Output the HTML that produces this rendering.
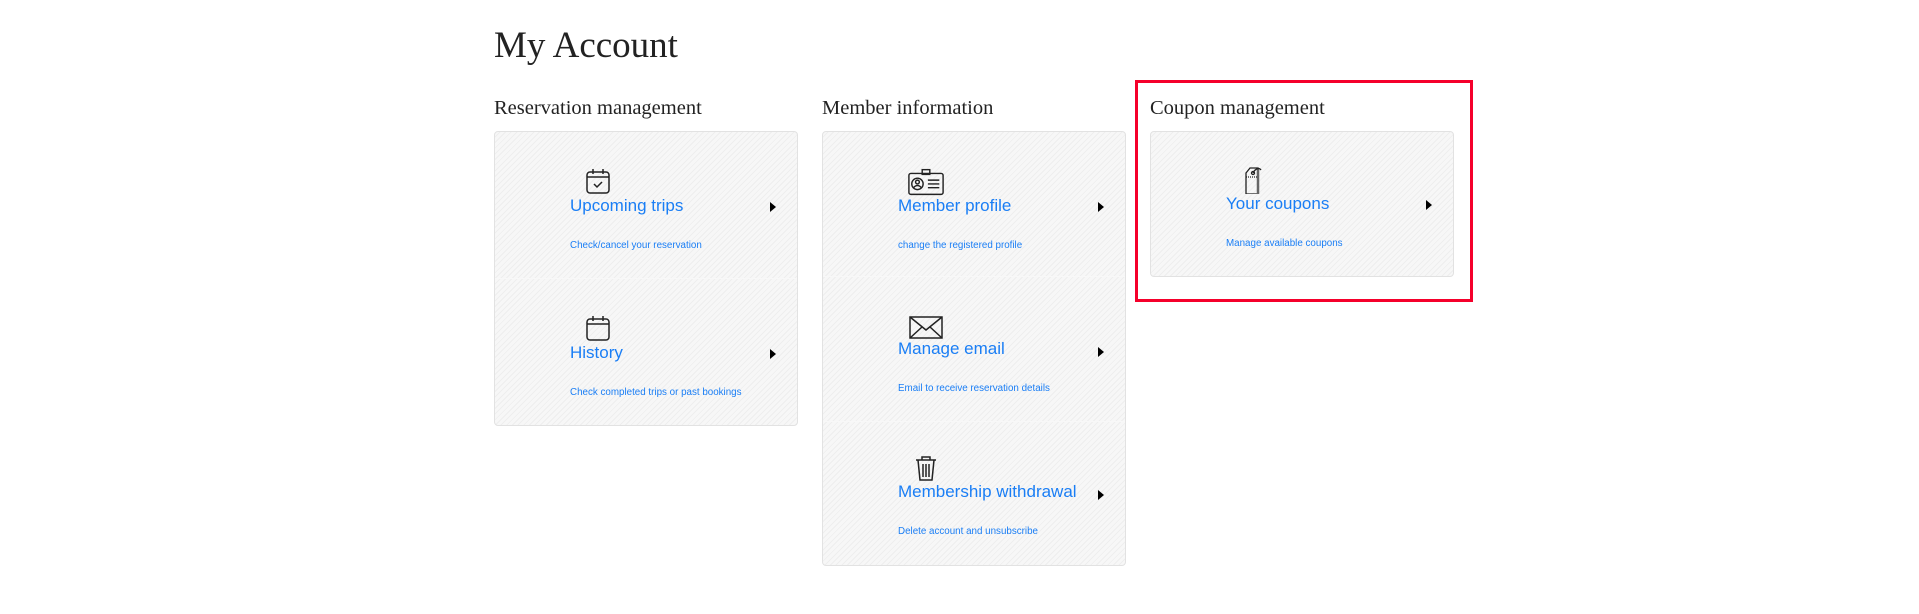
<!DOCTYPE html>
<html><head><meta charset="utf-8"><style>
body{margin:0;width:1919px;height:614px;background:#fff;font-family:"Liberation Serif",serif;color:#222;position:relative;overflow:hidden}
h1{position:absolute;left:494px;top:24px;margin:0;font-weight:normal;font-size:37px;line-height:44px}
h2{position:absolute;margin:0;font-weight:normal;font-size:20.5px;line-height:24px;top:96px}
.card{position:absolute;top:131px;width:302px;border:1px solid #e2e2e2;border-radius:4px;
background:repeating-linear-gradient(135deg,#f7f7f7 0 3px,#eeeeee 3px 4px)}
.item{position:relative;height:146px;border-top:1px solid #f8f8f8}
.item:first-child{border-top:none}
.ic{position:absolute;left:89px;top:36px;width:28px;height:28px}
.t{position:absolute;left:75px;top:64px;font-family:"Liberation Sans",sans-serif;font-size:17px;color:#1a7ef5;white-space:nowrap}
.s{position:absolute;left:75px;top:108px;font-family:"Liberation Sans",sans-serif;font-size:9.8px;color:#1a7ef5;white-space:nowrap}
.a{position:absolute;left:275px;top:70px;width:0;height:0;border-left:6px solid #000;border-top:5px solid transparent;border-bottom:5px solid transparent}
.red{position:absolute;left:1135px;top:80px;width:332px;height:216px;border:3px solid #f5002b}
</style></head><body>
<h1>My Account</h1>
<h2 style="left:494px">Reservation management</h2>
<h2 style="left:822px">Member information</h2>
<h2 style="left:1150px">Coupon management</h2>
<div class="red"></div>
<div class="card" style="left:494px">
 <div class="item">
  <svg class="ic" viewBox="0 0 28 28" fill="none" stroke="#222" stroke-width="1.5"><rect x="3" y="4" width="22" height="21" rx="3"/><path d="M3 9h22M9 1v5M19 1v5M10 16l3 3 5-5"/></svg>
  <div class="t">Upcoming trips</div><div class="a"></div><div class="s">Check/cancel your reservation</div>
 </div>
 <div class="item">
  <svg class="ic" viewBox="0 0 28 28" fill="none" stroke="#222" stroke-width="1.5"><rect x="3" y="4" width="22" height="21" rx="3"/><path d="M3 9h22M9 1v5M19 1v5"/></svg>
  <div class="t">History</div><div class="a"></div><div class="s">Check completed trips or past bookings</div>
 </div>
</div>
<div class="card" style="left:822px">
 <div class="item" style="height:144px">
  <svg class="ic" viewBox="0 0 40 28" style="width:38px;left:84px" fill="none" stroke="#222" stroke-width="1.5"><rect x="2" y="5" width="36" height="22" rx="2"/><rect x="16" y="1" width="8" height="5"/><circle cx="11" cy="16" r="6"/><circle cx="11" cy="14" r="2"/><path d="M7 20c2-3 6-3 8 0M22 12h12M22 16h12M22 20h12"/></svg>
  <div class="t">Member profile</div><div class="a"></div><div class="s">change the registered profile</div>
 </div>
 <div class="item" style="height:144px">
  <svg class="ic" viewBox="0 0 34 28" style="width:34px;left:86px" fill="none" stroke="#222" stroke-width="1.5"><rect x="1" y="4" width="32" height="21"/><path d="M1 4l16 13L33 4M1 25l12-11M33 25L21 14"/></svg>
  <div class="t" style="top:62px">Manage email</div><div class="a"></div><div class="s" style="top:106px">Email to receive reservation details</div>
 </div>
 <div class="item" style="height:143px">
  <svg class="ic" viewBox="0 0 28 28" style="top:32px" fill="none" stroke="#222" stroke-width="1.5"><path d="M4 6h20M10 6V3h8v3M6 6l2 20h12l2-20M11 10v13M14 10v13M17 10v13"/></svg>
  <div class="t" style="top:60px">Membership withdrawal</div><div class="a" style="top:68px"></div><div class="s" style="top:104px">Delete account and unsubscribe</div>
 </div>
</div>
<div class="card" style="left:1150px;height:144px">
 <div class="item" style="height:144px">
  <svg class="ic" viewBox="0 0 28 28" style="left:92px;top:34px" fill="none" stroke="#222" stroke-width="1.3"><path d="M3 7l4-5h8v26H3z"/><path d="M15 4v24" stroke-width="2.5" stroke="#666"/><circle cx="10" cy="7" r="1.5"/><path d="M10 7c2-4 6-6 8-3" /><path d="M3 11h12" stroke-dasharray="1 1"/></svg>
  <div class="t" style="top:62px">Your coupons</div><div class="a" style="top:68px"></div><div class="s" style="top:106px">Manage available coupons</div>
 </div>
</div>
</body></html>
